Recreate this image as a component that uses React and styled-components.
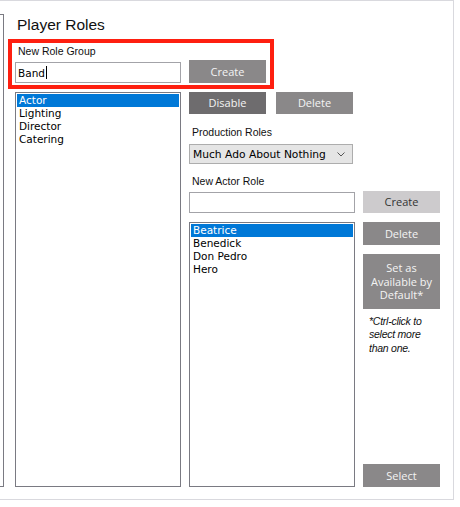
import React from 'react';
import styled, { createGlobalStyle } from 'styled-components';

const Global = createGlobalStyle`
	body {
		margin: 0;
		background: #ffffff;
	}
`;

const Panel = styled.div`
	position: relative;
	display: flex;
	align-items: flex-start;
	box-sizing: border-box;
	width: 454px;
	height: 500px;
	padding-top: 13px;
	border: 1px solid #d9d9de;
	border-left: none;
	background: #ffffff;
`;

const Stub = styled.div`
	box-sizing: border-box;
	width: 4px;
	height: 473px;
	border: 1px solid #7a7a82;
	border-left: none;
`;

const Main = styled.div`
	display: flex;
	flex-direction: column;
	margin-left: 11px;
`;

const Title = styled.div`
	font-family: 'Liberation Sans', Arial, sans-serif;
	font-size: 15.5px;
	line-height: 18px;
	padding-top: 2px;
	margin-left: 2px;
	color: #111111;
`;

const Label = styled.div`
	font-family: 'Liberation Sans', Arial, sans-serif;
	font-size: 10.5px;
	line-height: 13px;
	margin-top: ${(p) => p.$top}px;
	margin-left: 3px;
	color: #111111;
`;

const Row = styled.div`
	display: flex;
	align-items: ${(p) => p.$align || 'flex-start'};
	margin-top: ${(p) => p.$top || 0}px;
`;

const TextBox = styled.div`
	box-sizing: border-box;
	display: flex;
	align-items: center;
	width: 166px;
	height: 21px;
	margin-top: ${(p) => p.$top || 0}px;
	padding-left: 2px;
	border: 1px solid #a3a3a8;
	font-family: 'DejaVu Sans', Tahoma, sans-serif;
	font-size: 10.5px;
	color: #000000;
`;

const Caret = styled.span`
	display: inline-block;
	width: 1px;
	height: 13px;
	margin-left: 1px;
	background: #000000;
`;

const Button = styled.div`
	box-sizing: border-box;
	display: flex;
	align-items: center;
	justify-content: center;
	text-align: center;
	width: 77px;
	height: ${(p) => p.$h || 22}px;
	margin-left: ${(p) => p.$left || 0}px;
	margin-top: ${(p) => p.$top || 0}px;
	background: ${(p) => (p.$tone === 'dark' ? '#6e6c6e' : p.$tone === 'light' ? '#cdcbcd' : '#8a8889')};
	color: ${(p) => (p.$tone === 'light' ? '#333333' : '#f4f4f4')};
	font-family: 'Open Sans', 'Segoe UI', sans-serif;
	font-size: 11px;
	line-height: 13.5px;
`;

const List = styled.div`
	box-sizing: border-box;
	width: 166px;
	height: ${(p) => p.$h}px;
	margin-top: ${(p) => p.$top || 0}px;
	padding: 1px;
	border: 1px solid #7a7a82;
	font-family: 'DejaVu Sans', Tahoma, sans-serif;
	font-size: 10.5px;
	line-height: 13px;
`;

const Item = styled.div`
	padding-left: 2px;
	background: ${(p) => (p.$selected ? '#0078d7' : 'transparent')};
	color: ${(p) => (p.$selected ? '#ffffff' : '#000000')};
`;

const RightCol = styled.div`
	display: flex;
	flex-direction: column;
	width: 251px;
	margin-left: 8px;
`;

const Select = styled.div`
	box-sizing: border-box;
	display: flex;
	align-items: center;
	justify-content: space-between;
	width: 164px;
	height: 20px;
	margin-top: 5px;
	padding: 0 7px 0 3px;
	background: #e5e5e5;
	border: 1px solid #adadad;
	font-family: 'DejaVu Sans', Tahoma, sans-serif;
	font-size: 10.7px;
	color: #000000;
`;

const Stack = styled.div`
	display: flex;
	flex-direction: column;
	margin-left: ${(p) => p.$left || 0}px;
`;

const Note = styled.div`
	margin-top: 6px;
	padding-left: 6px;
	font-family: 'Liberation Sans', Arial, sans-serif;
	font-style: italic;
	font-size: 10.5px;
	letter-spacing: -0.25px;
	line-height: 13.3px;
	color: #111111;
`;

const Highlight = styled.div`
	position: absolute;
	left: 8px;
	top: 38px;
	width: 266px;
	height: 50px;
	box-sizing: border-box;
	border: 4px solid #fe1f10;
	pointer-events: none;
`;

const groups = ['Actor', 'Lighting', 'Director', 'Catering'];
const actors = ['Beatrice', 'Benedick', 'Don Pedro', 'Hero'];

export default function App() {
	return (
		<>
			<Global />
			<Panel>
				<Stub />
				<Main>
					<Title>Player Roles</Title>
					<Label $top={11}>New Role Group</Label>
					<Row $align="flex-end" $top={2}>
						<TextBox>
							Band
							<Caret />
						</TextBox>
						<Button $h={23} $left={8}>Create</Button>
					</Row>
					<Row $top={9}>
						<List $h={395}>
							{groups.map((g, i) => (
								<Item key={g} $selected={i === 0}>{g}</Item>
							))}
						</List>
						<RightCol>
							<Row>
								<Button $tone="dark">Disable</Button>
								<Button $left={10}>Delete</Button>
							</Row>
							<Label $top={12}>Production Roles</Label>
							<Select>
								<span>Much Ado About Nothing</span>
								<svg width="8" height="5" viewBox="0 0 8 5">
									<polyline points="0.5,0.5 4,4 7.5,0.5" fill="none" stroke="#555" strokeWidth="1" />
								</svg>
							</Select>
							<Label $top={11}>New Actor Role</Label>
							<Row $top={3} $align="stretch">
								<Stack>
									<TextBox $top={1} />
									<List $h={265} $top={9}>
										{actors.map((a, i) => (
											<Item key={a} $selected={i === 0}>{a}</Item>
										))}
									</List>
								</Stack>
								<Stack $left={8}>
									<Button $tone="light">Create</Button>
									<Button $h={23} $top={9}>Delete</Button>
									<Button $h={55} $top={9}>
										Set as
										<br />
										Available by
										<br />
										Default*
									</Button>
									<Note>
										*Ctrl-click to
										<br />
										select more
										<br />
										than one.
									</Note>
									<Button $h={23} style={{ marginTop: 'auto' }}>Select</Button>
								</Stack>
							</Row>
						</RightCol>
					</Row>
				</Main>
				<Highlight />
			</Panel>
		</>
	);
}
